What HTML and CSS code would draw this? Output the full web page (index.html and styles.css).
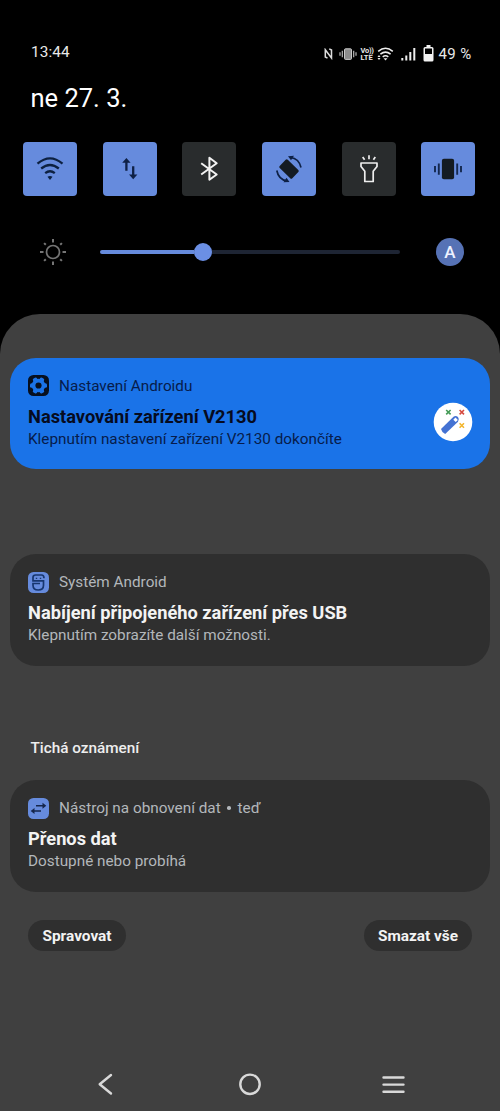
FILE: index.html
```html
<!DOCTYPE html>
<html lang="cs">
<head>
<meta charset="utf-8">
<title>Oznámení</title>
<link rel="stylesheet" href="styles.css">
</head>
<body>
<main class="screen">
  <header class="status">
    <span class="clock">13:44</span>
    <div class="indicators">
      <svg class="i-nfc" width="9" height="12" viewBox="0 0 9 12"><path d="M3.500 10.200 1.300 9V1.700L7.500 10V2L5.200.9" fill="none" stroke="#ddd" stroke-width="1.500"/></svg>
      <svg class="i-vibrate" width="18" height="12" viewBox="0 0 18 12"><rect x="5.500" y=".8" width="7" height="10.600" rx="1" fill="#8d8d8d" stroke="#c8c8c8"/><path d="M3.300 2.800v6.500M14.700 2.800v6.500M1 4.200v3.600M17 4.200v3.600" stroke="#bbb" stroke-width="1.200"/></svg>
      <span class="volte"><b>Vo))</b><b class="lte">LTE</b></span>
      <svg class="i-wifi" width="17" height="14" viewBox="0 0 17 14"><path d="M1.200 4.400Q8.500-1.800 15.800 4.400M3.400 7.200q5.100-4.200 10.200 0M5.700 9.900q2.800-2.200 5.600 0" fill="none" stroke="#eee" stroke-width="1.500"/><path d="m8.500 13.400-2-2.200h4zM.5 10 2 8l1.500 2zM.5 11h3L2 13z" fill="#eee"/></svg>
      <svg class="i-signal" width="15" height="14" viewBox="0 0 15 14"><path d="M1.300 13.500v-2.500M5.300 13.500V8.500M9.300 13.500V5M13.300 13.500V1" stroke="#eee" stroke-width="2"/></svg>
      <svg class="i-battery" width="11" height="17" viewBox="0 0 11 17"><path d="M3.500 0h4v2H9q1.500 0 1.500 1.500v11.500q0 1.500-1.500 1.500H2q-1.500 0-1.500-1.500V3.500Q.5 2 2 2h1.500z" fill="#f2f2f2"/><path d="M2 3.500h7V9H2z"/></svg>
      <span class="percent">49 %</span>
    </div>
  </header>

  <h1 class="date">ne 27. 3.</h1>

  <section class="tiles">
    <div class="tile on"><svg width="28" height="28" viewBox="0 0 28 28"><path d="M1.500 8.700Q14-2 26.500 8.700M5.200 13.500q8.800-7 17.600 0M9.200 18.200q4.800-3.800 9.600 0" fill="none" stroke="#0d2141" stroke-width="2.300"/><path d="M11.500 21.700q2.500-1.200 5 0L14 25z" fill="#0d2141"/></svg></div>
    <div class="tile on"><svg width="28" height="28" viewBox="0 0 28 28"><path d="M10.400 15.700V6M17.200 11.300v9.500" stroke="#0f2146" stroke-width="2.300" fill="none"/><path d="M6.200 7.700 10.400 3l4.200 4.700zM13 19.500h8.400l-4.200 4.700z" fill="#0f2146"/></svg></div>
    <div class="tile"><svg width="28" height="28" viewBox="0 0 28 28"><path d="m6.200 8.200 15.500 11.300-7.300 5.200V2.800l7.300 5.400-15.500 11.300" fill="none" stroke="#f2f2f2" stroke-width="2" stroke-linejoin="round"/></svg></div>
    <div class="tile on"><svg width="28" height="28" viewBox="0 0 28 28"><rect x="8.200" y="5.200" width="11.600" height="17.600" rx="1.500" transform="rotate(-46 14 14)" fill="#141b22"/><path d="M15.500 2.500Q24 3.500 26 12.500M1.800 15.500Q3.500 24.500 12 26" fill="none" stroke="#0e2146" stroke-width="1.700"/><path d="m13 1.300 6-.5-3 4.500zM14.500 26.900l-6 .3 3-4.500z" fill="#0e2146"/></svg></div>
    <div class="tile"><svg class="torch" width="28" height="30" viewBox="0 0 28 30"><path d="M6 10H22v3.500l-3.800 4.800v10.200H9.800V18.300L6 13.500z" fill="none" stroke="#eee" stroke-width="1.700" stroke-linejoin="round"/><path d="m7.700 4 1.900 2.800M14 2.200v4M20.300 4l-1.900 2.800" stroke="#eee" stroke-width="1.700"/></svg></div>
    <div class="tile on"><svg width="30" height="28" viewBox="0 0 30 28"><rect x="8.900" y="3.800" width="12.200" height="20.400" rx="2" fill="#141b22"/><path d="M5.800 8.500v11.200M24.200 8.500v11.200M2 11v6.300M28 11v6.300" stroke="#14284f" stroke-width="1.900"/></svg></div>
  </section>

  <section class="brightness">
    <svg width="28" height="28" viewBox="0 0 28 28" fill="none" stroke="#757575"><circle cx="14" cy="14" r="6.500" stroke-width="1.700"/><path d="M14 1v3.500M14 23.500V27M1 14h3.500M23.500 14H27M5.100 5.100l1.700 1.700M21.200 21.200l1.700 1.700M5.100 22.900l1.700-1.700M21.200 6.800l1.700-1.700" stroke-width="2"/></svg>
    <div class="slider"><div class="level"></div><div class="thumb"></div><div class="rest"></div></div>
    <div class="auto">A</div>
  </section>

  <section class="sheet">
    <article class="card setup">
      <div class="body">
        <div class="source"><svg width="21" height="21" viewBox="0 0 21 21"><rect width="21" height="21" rx="5.500" fill="#07101f"/><g fill="#1a73e8"><circle cx="10.500" cy="10.500" r="6.800"/><rect x="8.200" y="2" width="4.600" height="17" rx="1.500" transform="rotate(30 10.500 10.500)"/><rect x="8.200" y="2" width="4.600" height="17" rx="1.500" transform="rotate(90 10.500 10.500)"/><rect x="8.200" y="2" width="4.600" height="17" rx="1.500" transform="rotate(150 10.500 10.500)"/></g><circle cx="10.500" cy="10.500" r="3.100" fill="#07101f"/></svg><span>Nastavení Androidu</span></div>
        <h2>Nastavování zařízení V2130</h2>
        <p>Klepnutím nastavení zařízení V2130 dokončíte</p>
      </div>
      <svg class="wand" width="40" height="40" viewBox="0 0 40 40"><circle cx="20" cy="20" r="19.300" fill="#fff"/><path d="M8 27 20.500 14.700q2.300-1.700 4.500.4 1.800 2.300 0 4.600L12.200 32q-3.400-1.500-4.200-5z" fill="#4472d3"/><path d="m20.300 17.700 2.200-2.200 2.400 2.400-2.200 2.200z" fill="#fff"/><g fill="none" stroke-width="1.600"><path d="m13.200 8 4.400 4.400m0-4.400-4.400 4.400" stroke="#459b57"/><path d="m26.600 8 4.400 4.400m0-4.400-4.400 4.400" stroke="#d64b40"/><path d="m26.600 21.300 4.400 4.400m0-4.400-4.400 4.400" stroke="#f3b52c"/></g></svg>
    </article>

    <article class="card usb">
      <div class="body">
        <div class="source"><svg width="21" height="21" viewBox="0 0 21 21"><rect width="21" height="21" rx="5.500" fill="#668bdd"/><path d="M16 6.200Q16 3 13.500 3h-6Q5 3 5 5.500v3.300h10.500v4.500q0 4.700-5.200 4.700T5 13.300v-1.800h7" fill="none" stroke="#17366f" stroke-width="1.700"/><path d="M7.800 6.300h1.400M11.800 6.300h1.400" fill="none" stroke="#17366f" stroke-width="1.300"/></svg><span>Systém Android</span></div>
        <h2>Nabíjení připojeného zařízení přes USB</h2>
        <p>Klepnutím zobrazíte další možnosti.</p>
      </div>
    </article>

    <h3 class="silent">Tichá oznámení</h3>

    <article class="card transfer">
      <div class="body">
        <div class="source"><svg width="21" height="21" viewBox="0 0 21 21"><rect width="21" height="21" rx="5.500" fill="#668bdd"/><path d="M8 7.700h8M5 13h8" stroke="#15264c" stroke-width="1.600"/><path d="m14.500 4.700 3.800 3-3.800 3zM6.500 10v6l-3.800-3z" fill="#15264c"/></svg><span>Nástroj na obnovení dat</span><i class="dot"></i><span>teď</span></div>
        <h2>Přenos dat</h2>
        <p>Dostupné nebo probíhá</p>
      </div>
    </article>

    <div class="actions"><button class="manage">Spravovat</button><button class="clear">Smazat vše</button></div>

    <nav class="nav">
      <svg width="24" height="24" viewBox="0 0 24 24"><path d="M17 3 5.700 12.300 17 21.500"/></svg>
      <svg width="24" height="24" viewBox="0 0 24 24"><circle cx="12" cy="12.300" r="9.700"/></svg>
      <svg width="24" height="24" viewBox="0 0 24 24"><path d="M1.500 5.500h20M1.500 12.600h20M1.500 19.800h20"/></svg>
    </nav>
  </section>
</main>
</body>
</html>
```

FILE: styles.css
```css
* { box-sizing: border-box; }
body { margin: 0; background: #000; font-family: Roboto, "Noto Sans", sans-serif; }
h1, h2, h3, p { margin: 0; }
svg { display: block; flex: none; }
.screen { width: 500px; height: 1111px; display: flex; flex-direction: column; overflow: hidden; }

.status { height: 62px; padding: 42px 28.500px 0 31px; display: flex; justify-content: space-between; color: #e9e9e9; }
.clock { font-size: 15.300px; line-height: 20px; letter-spacing: .1px; }
.indicators { display: flex; align-items: center; height: 23px; }
.i-vibrate { margin-left: 6px; }
.volte { display: flex; flex-direction: column; margin-left: 4px; width: 13px; font-size: 7.500px; line-height: 7px; white-space: nowrap; }
.volte b { letter-spacing: -.3px; }
.volte .lte { letter-spacing: 0; }
.i-wifi { margin-left: 3px; }
.i-signal { margin-left: 7px; }
.i-battery { margin-left: 7px; }
.percent { margin-left: 5px; font-size: 15px; line-height: 22px; letter-spacing: .35px; white-space: nowrap; }

.date { height: 80px; padding: 20px 0 0 30.500px; font-size: 25.500px; line-height: 32px; font-weight: 400; color: #fff; }

.tiles { display: flex; justify-content: space-between; padding: 0 24.500px 0 23px; height: 54px; }
.tile { width: 54px; height: 54px; border-radius: 4px; background: #292c2d; display: flex; align-items: center; justify-content: center; }
.tile.on { background: #668bdd; }
.torch { margin-bottom: 2px; }

.brightness { height: 117.500px; padding: 41.500px 36px 0 39px; display: flex; align-items: flex-start; justify-content: space-between; }
.slider { width: 300px; height: 28px; margin-right: 4px; display: flex; align-items: center; }
.level { width: 94px; height: 4px; border-radius: 2px 0 0 2px; background: #668bdd; }
.thumb { width: 18px; height: 18px; border-radius: 50%; background: #6b8fe4; }
.rest { flex: 1; height: 4px; border-radius: 0 2px 2px 0; background: #1e2534; }
.auto { width: 28px; height: 28px; border-radius: 50%; background: #5672b5; color: #eef2ff; font-size: 17px; font-weight: 500; line-height: 29px; text-align: center; }

.sheet { flex: 1; background: #404040; border-radius: 40px 40px 0 0; padding: 44px 10px 0; display: flex; flex-direction: column; }
.card { height: 111.500px; flex: none; border-radius: 26px; background: #2f2f2f; padding: 17.500px 17.500px 0 18px; display: flex; justify-content: space-between; color: #f3f3f3; }
.source { display: flex; align-items: center; height: 21px; font-size: 15.300px; line-height: 18px; color: #b3b7bb; }
.source svg { margin-right: 10px; }
.dot { width: 3.500px; height: 3.500px; border-radius: 50%; background: #b3b7bb; margin: 0 6.700px; }
.card h2 { margin-top: 8.500px; font-size: 18.250px; line-height: 24px; font-weight: 700; white-space: nowrap; }
.card p { margin-top: .4px; font-size: 15.300px; line-height: 21px; color: #b3b7bb; white-space: nowrap; }
.setup { background: #1a73e8; color: #060b20; }
.setup .source, .setup p { color: #071c4b; }
.wand { margin-top: 27px; }
.usb { margin-top: 85px; }
.silent { margin: 71.500px 0 0 20.500px; font-size: 15.300px; line-height: 22px; font-weight: 500; color: #eee; }
.transfer { margin-top: 21px; }

.actions { display: flex; justify-content: space-between; padding: 0 18px; margin-top: 28px; height: 31px; }
.actions button { height: 31px; border: 0; padding: 1px 0 0; border-radius: 16px; background: #2f2f2f; color: #f3f3f3; font: 700 15.400px/30px Roboto, sans-serif; }
.manage { width: 98px; }
.clear { width: 108px; }
.nav { display: flex; justify-content: space-between; margin-top: 121px; padding: 0 84px; }
.nav svg { fill: none; stroke: #d9d9d9; stroke-width: 2.400; stroke-linecap: round; stroke-linejoin: round; }
```
